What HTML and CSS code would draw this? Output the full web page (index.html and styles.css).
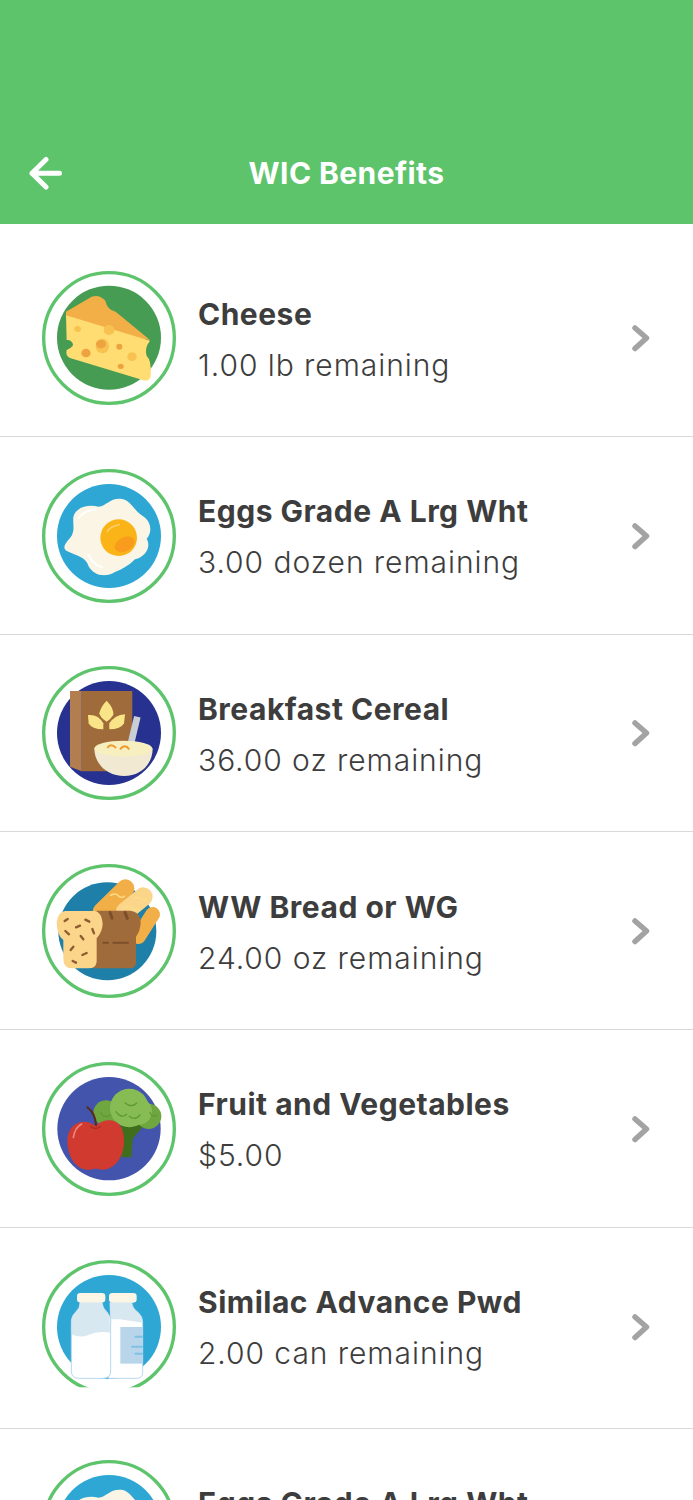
FILE: index.html

```html
<!DOCTYPE html>
<html lang="en">
<head>
<meta charset="UTF-8" />
<meta name="viewport" content="width=device-width, initial-scale=1" />
<title>WIC Benefits</title>
<link rel="stylesheet" href="styles.css">
</head>
<body>

<svg class="sprite" xmlns="http://www.w3.org/2000/svg">
  <symbol id="icon-cheese" viewBox="126 423 402 402">
    <circle cx="327" cy="624" r="196" fill="none" stroke="#5ec46c" stroke-width="10"/>
    <circle cx="327" cy="623" r="156" fill="#479c53"/>
    <path d="M198 545 L275 500 Q298 492 316 512 Q322 540 347 545 L450 630 L320 610 L198 560 Z" fill="#f2ae47"/>
    <path d="M198 556 L450 632 Q432 655 440 678 Q455 690 452 740 Q445 756 428 750 L210 684 Q196 678 200 660 Q224 650 218 640 Q212 628 200 630 Z" fill="#ffdd73"/>
    <ellipse cx="233" cy="597" rx="10" ry="9" fill="#f7c24f"/>
    <ellipse cx="327" cy="600" rx="16" ry="15" fill="#f7c24f"/>
    <ellipse cx="307" cy="648" rx="20" ry="22" fill="#f7c24f"/>
    <ellipse cx="303" cy="642" rx="15" ry="13" fill="#eda33f"/>
    <ellipse cx="258" cy="669" rx="14" ry="13" fill="#eda33f"/>
    <ellipse cx="358" cy="650" rx="9" ry="9" fill="#eda33f"/>
    <ellipse cx="396" cy="680" rx="14" ry="13" fill="#f7c24f"/>
    <ellipse cx="362" cy="709" rx="9" ry="8" fill="#eda33f"/>
  </symbol>

  <symbol id="icon-eggs" viewBox="36 25 402 402">
    <circle cx="237" cy="226" r="196" fill="none" stroke="#5ec46c" stroke-width="10"/>
    <circle cx="237" cy="226" r="156" fill="#2ea7d5"/>
    <path d="M130 170 C135 140 175 130 205 138 C230 135 240 112 272 114 C302 116 312 150 337 165 C364 180 368 215 350 234 C364 258 347 288 315 296 C297 314 277 326 255 334 C225 352 190 344 175 315 C168 290 140 285 112 272 C92 260 110 245 125 225 C135 205 128 190 130 170 Z" fill="#fbf5e6"/>
    <circle cx="266" cy="231" r="55" fill="#fbb417"/>
    <ellipse cx="284" cy="251" rx="32" ry="21" transform="rotate(-28 284 251)" fill="#f99b1c"/>
    <path d="M146 172 Q160 150 196 147 M175 283 Q190 312 216 320" fill="none" stroke="#fff" stroke-width="6" stroke-linecap="round"/>
    <path d="M232 213 Q240 198 268 192" fill="none" stroke="#fcd372" stroke-width="4" stroke-linecap="round"/>
  </symbol>

  <symbol id="icon-cereal" viewBox="36 618 402 402">
    <circle cx="237" cy="819" r="196" fill="none" stroke="#5ec46c" stroke-width="10"/>
    <circle cx="237" cy="819" r="156" fill="#27318f"/>
    <path d="M155 693 H307 V934 H155 Z" fill="#a06b3b"/>
    <path d="M120 693 H155 V934 L120 920 Z" fill="#b27e50"/>
    <path d="M230 722 Q252 745 250 765 Q240 780 230 785 Q212 775 208 760 Q212 740 230 722 Z" fill="#f9e587"/>
    <path d="M174 765 Q205 762 220 790 V808 Q185 808 176 790 Z" fill="#f9e587"/>
    <path d="M285 763 Q255 765 238 790 V808 Q272 808 282 790 Z" fill="#f9e587"/>
    <path d="M322 770 L303 850" fill="none" stroke="#c9ced6" stroke-width="20"/>
    <path d="M193 865 C193 915 235 948 282 948 C330 948 368 915 368 865 Z" fill="#f1e9d2"/>
    <ellipse cx="280" cy="866" rx="87" ry="24" fill="#f7efc0"/>
    <path d="M232 864 Q242 848 258 864 M270 868 Q284 850 298 868" fill="none" stroke="#ee9a2c" stroke-width="6"/>
  </symbol>

  <symbol id="icon-bread" viewBox="36 27 402 402">
    <circle cx="237" cy="228" r="196" fill="none" stroke="#5ec46c" stroke-width="10"/>
    <circle cx="232" cy="229" r="147" fill="#1e7fa8"/>
    <path d="M215 170 L286 100" fill="none" stroke="#f2ae47" stroke-width="54" stroke-linecap="round"/>
    <path d="M285 170 L340 125" fill="none" stroke="#fbd58a" stroke-width="56" stroke-linecap="round"/>
    <path d="M325 245 L368 178" fill="none" stroke="#f2ae47" stroke-width="44" stroke-linecap="round"/>
    <path d="M240 122 Q255 112 265 122 T285 122 M310 132 Q322 122 335 132 T350 128 M280 160 Q295 150 305 160 T330 160" fill="none" stroke="#fbe08a" stroke-width="4"/>
    <path d="M200 167 H300 Q332 170 332 205 Q330 230 318 245 V325 Q316 340 300 340 H190 Z" fill="#a06b3b"/>
    <path d="M105 168 H195 Q215 172 218 205 Q218 230 200 250 V320 Q198 340 175 340 H125 Q100 340 100 310 V255 Q80 240 80 200 Q85 170 105 168 Z" fill="#fbd58a"/>
    <path d="M240 172 L246 190 M285 172 L292 190" fill="none" stroke="#7c4f2b" stroke-width="9" stroke-linecap="round"/>
    <path d="M220 263 H234 M250 263 H294" fill="none" stroke="#7c4f2b" stroke-width="6" stroke-linecap="round"/>
    <path d="M104 198 L113 192 M166 194 L178 200 M106 228 L117 238 M138 217 L150 212 M187 222 L192 235 M152 243 L160 253 M122 285 L130 275 M157 300 L170 294 M128 318 L138 323" fill="none" stroke="#8e5c31" stroke-width="7" stroke-linecap="round"/>
  </symbol>

  <symbol id="icon-fruit" viewBox="36 619 402 402">
    <circle cx="237" cy="820" r="196" fill="none" stroke="#5ec46c" stroke-width="10"/>
    <circle cx="237" cy="819" r="155" fill="#4254ac"/>
    <path d="M272 800 L274 905 H304 L308 850 L345 805 Z" fill="#3f6f1d"/>
    <circle cx="228" cy="772" r="38" fill="#6fa640"/>
    <circle cx="356" cy="782" r="38" fill="#6fa640"/>
    <circle cx="298" cy="757" r="58" fill="#87bc55"/>
    <circle cx="326" cy="767" r="40" fill="#87bc55"/>
    <path d="M258 768 Q272 790 290 776 M285 742 Q305 758 320 742 M298 782 Q315 796 330 778 M360 770 Q365 788 382 778 M212 772 Q224 790 242 778" fill="none" stroke="#5f9a33" stroke-width="4" stroke-linecap="round"/>
    <path d="M195 810 C230 782 285 785 282 860 C280 915 245 945 215 942 Q198 937 180 942 C140 945 112 905 112 855 C112 800 165 785 195 810 Z" fill="#d13a2e"/>
    <path d="M172 755 Q195 770 198 808" fill="none" stroke="#5a2a1c" stroke-width="6" stroke-linecap="round"/>
    <path d="M180 812 Q196 825 212 812" fill="none" stroke="#a92c22" stroke-width="4"/>
    <path d="M130 845 Q135 815 155 805" fill="none" stroke="#ec8a80" stroke-width="5" stroke-linecap="round"/>
  </symbol>

  <symbol id="icon-milk" viewBox="36 27 402 402">
    <circle cx="237" cy="228" r="196" fill="none" stroke="#5ec46c" stroke-width="10"/>
    <circle cx="237" cy="228" r="156" fill="#2ea7d5"/>
    <path d="M240 155 H305 Q306 172 325 185 Q338 197 338 215 V365 Q338 382 320 382 H235 L242 210 Z" fill="#fff" stroke="#b7d8ee" stroke-width="3"/>
    <path d="M240 155 H305 Q306 172 325 185 Q338 197 338 215 L270 205 L242 205 Z" fill="#d8e8f1"/>
    <rect x="271" y="228" width="67" height="110" fill="#b9d5ea"/>
    <path d="M314 257 H338 M304 287 H338 M314 308 H338" stroke="#7dc2e4" stroke-width="6"/>
    <path d="M150 155 H216 Q218 172 230 182 Q242 195 242 210 V360 Q242 382 220 382 H146 Q124 382 124 360 V210 Q124 195 138 182 Q150 172 150 155 Z" fill="#fff" stroke="#b7d8ee" stroke-width="3"/>
    <path d="M150 155 H216 Q218 172 230 182 Q241 195 241 245 Q205 238 175 252 Q150 262 125 250 V210 Q125 195 138 182 Q150 172 150 155 Z" fill="#d8e8f1"/>
    <rect x="141" y="126" width="85" height="29" rx="10" fill="#fbf5e6"/>
    <rect x="237" y="126" width="83" height="29" rx="10" fill="#fbf5e6"/>
    <rect x="30" y="409" width="420" height="24" fill="#fff"/>
  </symbol>

  <symbol id="icon-chevron" viewBox="0 0 20 28">
    <path d="M4 4 L15.500 14 L4 24.500" fill="none" stroke="#a3a3a3" stroke-width="5.500" stroke-linecap="round" stroke-linejoin="round"/>
  </symbol>
</svg>

<header class="topbar">
  <svg class="back" viewBox="0 0 36 36">
    <path d="M30.500 18.300 H3 M17 4.500 L3 18.300 L17 32" fill="none" stroke="#fff" stroke-width="5" stroke-linecap="round" stroke-linejoin="round"/>
  </svg>
  <h1 class="topbar-title">WIC Benefits</h1>
</header>

<main>
  <ul class="benefits">
    <li class="benefit benefit-first">
      <svg class="food"><use href="#icon-cheese"/></svg>
      <div class="benefit-text">
        <div class="benefit-name">Cheese</div>
        <div class="benefit-left">1.00 lb remaining</div>
      </div>
      <svg class="chevron"><use href="#icon-chevron"/></svg>
    </li>
    <li class="benefit">
      <svg class="food"><use href="#icon-eggs"/></svg>
      <div class="benefit-text">
        <div class="benefit-name">Eggs Grade A Lrg Wht</div>
        <div class="benefit-left">3.00 dozen remaining</div>
      </div>
      <svg class="chevron"><use href="#icon-chevron"/></svg>
    </li>
    <li class="benefit">
      <svg class="food"><use href="#icon-cereal"/></svg>
      <div class="benefit-text">
        <div class="benefit-name">Breakfast Cereal</div>
        <div class="benefit-left">36.00 oz remaining</div>
      </div>
      <svg class="chevron"><use href="#icon-chevron"/></svg>
    </li>
    <li class="benefit">
      <svg class="food"><use href="#icon-bread"/></svg>
      <div class="benefit-text">
        <div class="benefit-name">WW Bread or WG</div>
        <div class="benefit-left">24.00 oz remaining</div>
      </div>
      <svg class="chevron"><use href="#icon-chevron"/></svg>
    </li>
    <li class="benefit">
      <svg class="food"><use href="#icon-fruit"/></svg>
      <div class="benefit-text">
        <div class="benefit-name">Fruit and Vegetables</div>
        <div class="benefit-left">$5.00</div>
      </div>
      <svg class="chevron"><use href="#icon-chevron"/></svg>
    </li>
    <li class="benefit benefit-tall">
      <svg class="food"><use href="#icon-milk"/></svg>
      <div class="benefit-text">
        <div class="benefit-name">Similac Advance Pwd</div>
        <div class="benefit-left">2.00 can remaining</div>
      </div>
      <svg class="chevron"><use href="#icon-chevron"/></svg>
    </li>
    <li class="benefit">
      <svg class="food"><use href="#icon-eggs"/></svg>
      <div class="benefit-text">
        <div class="benefit-name">Eggs Grade A Lrg Wht</div>
        <div class="benefit-left">3.00 dozen remaining</div>
      </div>
      <svg class="chevron"><use href="#icon-chevron"/></svg>
    </li>
  </ul>
</main>

</body>
</html>
```

FILE: styles.css

```css
html, body {
  margin: 0;
  padding: 0;
}
body {
  font-family: Inter, "Open Sans", sans-serif;
  background: #fff;
  color: #3d3d3d;
  height: 1500px;
  overflow: hidden;
}
.sprite {
  display: none;
}
.topbar {
  height: 224px;
  box-sizing: border-box;
  padding: 0 29px 33px 29px;
  background: #5ec46c;
  display: grid;
  grid-template-columns: 1fr auto 1fr;
  align-items: end;
}
.back {
  width: 36px;
  height: 36px;
  display: block;
}
.topbar-title {
  margin: 0;
  color: #fff;
  font-size: 30px;
  font-weight: 700;
  letter-spacing: 0.4px;
  line-height: 36px;
}
.benefits {
  list-style: none;
  margin: 0;
  padding: 0;
}
.benefit {
  display: flex;
  align-items: center;
  padding: 31.7px 42px 31px 42px;
  border-bottom: 1px solid #d9d9dc;
}
.benefit-first {
  padding-top: 47px;
}
.benefit-tall {
  padding-top: 32px;
  padding-bottom: 34px;
}
.food {
  width: 134px;
  height: 134px;
  flex: none;
  display: block;
}
.benefit-text {
  flex: 1;
  margin-left: 22px;
  padding-top: 2px;
}
.benefit-name {
  font-size: 30px;
  font-weight: 700;
  letter-spacing: 0.5px;
  line-height: 36px;
}
.benefit-left {
  margin-top: 15px;
  font-size: 30px;
  font-weight: 300;
  letter-spacing: 0.95px;
  line-height: 36px;
}
.chevron {
  width: 20px;
  height: 28px;
  flex: none;
  display: block;
}
```
